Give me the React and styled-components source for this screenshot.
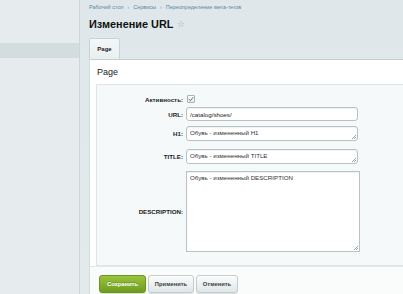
import React from "react";
import styled, { createGlobalStyle } from "styled-components";

const Global = createGlobalStyle`
  html, body { margin: 0; padding: 0; }
  body {
    width: 403px; height: 294px; overflow: hidden;
    font-family: "Liberation Sans", Arial, sans-serif;
    background: #dfe7ea;
  }
  * { box-sizing: border-box; }
`;

const Layout = styled.div`
  display: flex;
  width: 403px;
  height: 294px;
  overflow: hidden;
`;

const Sidebar = styled.aside`
  width: 80px;
  flex: none;
  background: #e6ecee;
  border-right: 1px solid #cdd6d9;
  padding-top: 43px;
`;

const SideItem = styled.div`
  height: 15px;
  background: ${(p) => (p.$active ? "#d3dcdf" : "transparent")};
`;

const Main = styled.main`
  flex: 1;
  min-width: 0;
  padding: 4px 0 0 9px;
  display: flex;
  flex-direction: column;
  background: linear-gradient(#dfe7ea, #e3eaec);
`;

const Crumbs = styled.nav`
  display: flex;
  align-items: center;
  gap: 4px;
  height: 6px;
  font-size: 5.5px;
  line-height: 6px;
  color: #6186a2;
  white-space: nowrap;
`;

const Sep = styled.span`
  color: #8aa0b0;
  font-size: 5px;
`;

const TitleRow = styled.div`
  display: flex;
  align-items: center;
  gap: 4px;
  margin-top: 8px;
  height: 13px;
`;

const Title = styled.h1`
  margin: 0;
  font-size: 10.9px;
  line-height: 13px;
  font-weight: bold;
  color: #111;
`;

const Star = styled.span`
  font-size: 9px;
  line-height: 9px;
  color: #9aa6ab;
`;

const Tabs = styled.div`
  display: flex;
  margin-top: 7px;
`;

const Tab = styled.div`
  width: 31px;
  height: 21px;
  display: flex;
  align-items: center;
  justify-content: center;
  font-size: 6px;
  font-weight: bold;
  color: #222;
  background: linear-gradient(#f4f7f8, #e9eff0);
  border: 1px solid #c9d3d6;
  border-bottom: none;
  border-radius: 2px 2px 0 0;
`;

const Panel = styled.section`
  flex: 1;
  background: #fff;
  border-top: 1px solid #c5cfd2;
  border-left: 1px solid #d3dcdf;
  display: flex;
  flex-direction: column;
`;

const PanelHead = styled.div`
  height: 24px;
  padding-left: 7px;
  display: flex;
  align-items: center;
  font-size: 9px;
  color: #222;
`;

const Box = styled.div`
  margin-left: 6px;
  height: 182px;
  background: #f5f9fa;
  border-top: 1px solid #dce5e8;
  border-left: 1px solid #dce5e8;
  border-bottom: 1px solid #dce5e8;
  padding-top: 10px;
  display: flex;
  flex-direction: column;
`;

const Row = styled.div`
  display: flex;
  align-items: center;
  margin-top: ${(p) => p.$mt || 0}px;
`;

const Label = styled.label`
  width: 89px;
  flex: none;
  text-align: right;
  padding-right: 3px;
  font-size: 6.2px;
  font-weight: bold;
  color: #222;
`;

const Check = styled.span`
  width: 8px;
  height: 8px;
  margin-left: 1px;
  border: 1px solid #a9b4b8;
  border-radius: 1px;
  background: linear-gradient(#fdfdfd, #e6eaeb);
  display: flex;
  align-items: center;
  justify-content: center;
`;

const Input = styled.input`
  width: 172px;
  height: 14px;
  padding: 0 3px;
  border: 1px solid #b8c2c5;
  border-radius: 3px;
  background: #fff;
  font-family: "Liberation Sans", Arial, sans-serif;
  font-size: 6.2px;
  color: #222;
  box-shadow: inset 0 1px 1px rgba(0, 0, 0, 0.06);
  outline: none;
`;

const AreaWrap = styled.div`
  position: relative;
  display: flex;
  &::after {
    content: "";
    position: absolute;
    right: 2px;
    bottom: 2px;
    width: 4px;
    height: 4px;
    background: linear-gradient(
      135deg,
      transparent 0 45%,
      #9aa3a6 45% 55%,
      transparent 55% 70%,
      #9aa3a6 70% 80%,
      transparent 80%
    );
    pointer-events: none;
  }
`;

const Area = styled.textarea`
  width: ${(p) => p.$w || 172}px;
  height: ${(p) => p.$h}px;
  padding: 2px 3px;
  border: 1px solid #b8c2c5;
  border-radius: ${(p) => (p.$square ? 0 : 3)}px;
  background: #fff;
  font-family: "Liberation Sans", Arial, sans-serif;
  font-size: 6.2px;
  line-height: 8px;
  color: #333;
  resize: none;
  overflow: hidden;
  outline: none;
  box-shadow: inset 0 1px 1px rgba(0, 0, 0, 0.06);
`;

const Footer = styled.div`
  flex: 1;
  background: #fafbfb;
  border-top: 1px solid #e3e9eb;
  display: flex;
  align-items: flex-start;
  gap: 2px;
  padding: 8px 0 0 9px;
`;

const Button = styled.button`
  width: ${(p) => p.$w}px;
  height: 18px;
  padding: 0;
  border-radius: 3px;
  font-family: "Liberation Sans", Arial, sans-serif;
  font-size: 5.8px;
  font-weight: bold;
  cursor: pointer;
  color: ${(p) => (p.$primary ? "#fff" : "#3a3f41")};
  border: 1px solid ${(p) => (p.$primary ? "#6a9420" : "#c3cccf")};
  background: ${(p) =>
    p.$primary
      ? "linear-gradient(#9ac33e, #6d9d1e)"
      : "linear-gradient(#fbfcfc, #dfe6e8)"};
  box-shadow: 0 1px 1px rgba(0, 0, 0, 0.12);
  text-shadow: ${(p) => (p.$primary ? "0 -1px 0 rgba(0,0,0,0.2)" : "none")};
`;

function TextArea(props) {
  return (
    <AreaWrap>
      <Area {...props} />
    </AreaWrap>
  );
}

export default function App() {
  return (
    <>
      <Global />
      <Layout>
        <Sidebar>
          <SideItem $active />
        </Sidebar>
        <Main>
          <Crumbs>
            <span>Рабочий стол</span>
            <Sep>›</Sep>
            <span>Сервисы</span>
            <Sep>›</Sep>
            <span>Переопределение мета-тегов</span>
          </Crumbs>
          <TitleRow>
            <Title>Изменение URL</Title>
            <Star>☆</Star>
          </TitleRow>
          <Tabs>
            <Tab>Page</Tab>
          </Tabs>
          <Panel>
            <PanelHead>Page</PanelHead>
            <Box>
              <Row>
                <Label>Активность:</Label>
                <Check>
                  <svg width="6" height="6" viewBox="0 0 6 6">
                    <path d="M0.8 3.2 L2.4 4.7 L5.2 1.2" fill="none" stroke="#556066" strokeWidth="0.9" />
                  </svg>
                </Check>
              </Row>
              <Row $mt={4}>
                <Label>URL:</Label>
                <Input defaultValue="/catalog/shoes/" />
              </Row>
              <Row $mt={5}>
                <Label>H1:</Label>
                <TextArea $h={15} defaultValue="Обувь - измененный H1" />
              </Row>
              <Row $mt={8}>
                <Label>TITLE:</Label>
                <TextArea $h={15} defaultValue="Обувь - измененный TITLE" />
              </Row>
              <Row $mt={7}>
                <Label>DESCRIPTION:</Label>
                <TextArea $h={81} $w={174} $square defaultValue="Обувь - измененный DESCRIPTION" />
              </Row>
            </Box>
            <Footer>
              <Button $primary $w={47}>Сохранить</Button>
              <Button $w={46}>Применить</Button>
              <Button $w={42}>Отменить</Button>
            </Footer>
          </Panel>
        </Main>
      </Layout>
    </>
  );
}
